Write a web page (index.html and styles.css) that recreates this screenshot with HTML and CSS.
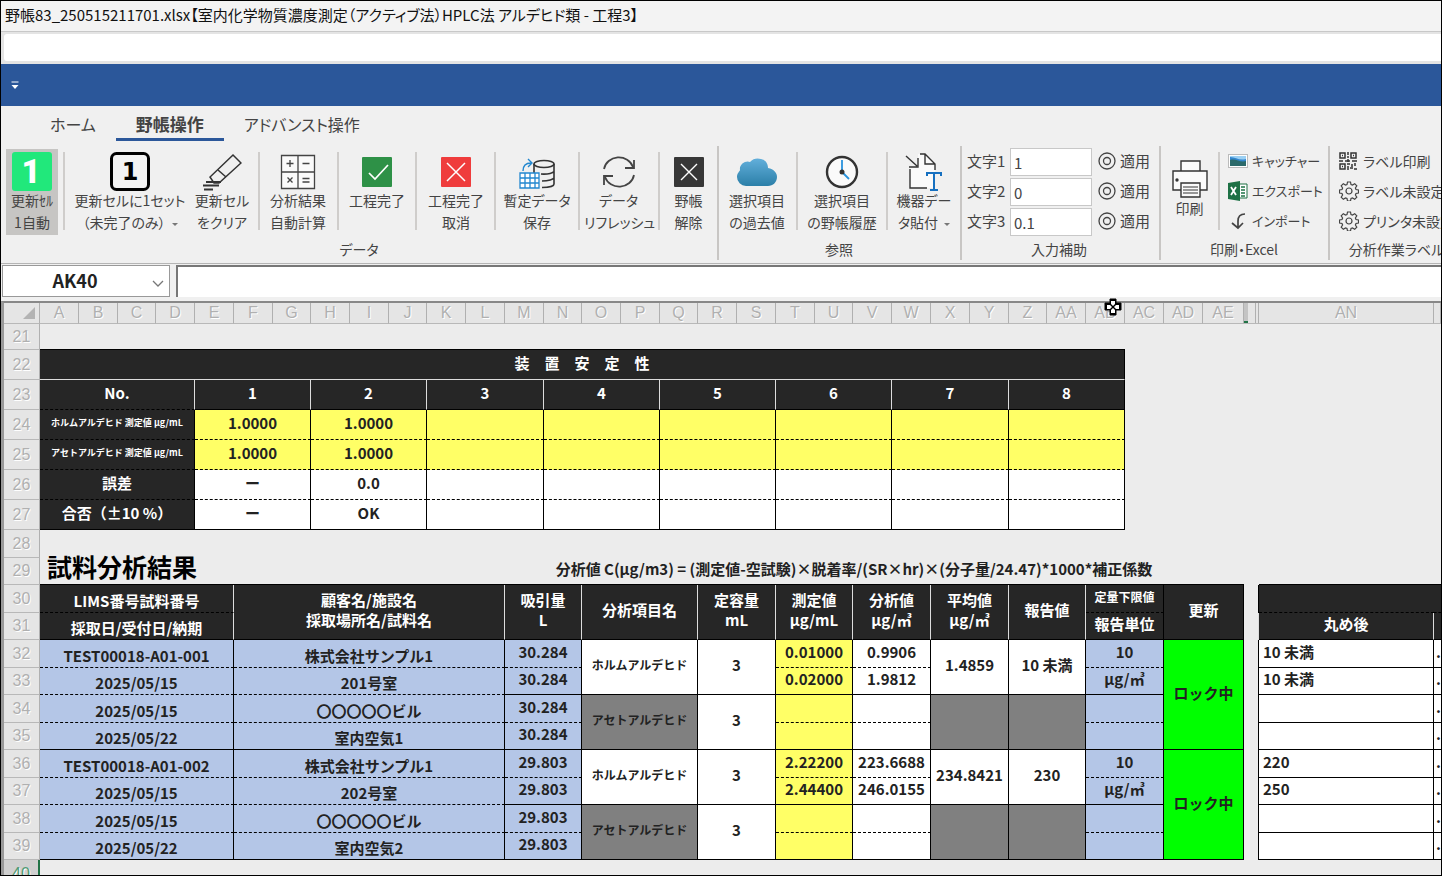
FILE: index.html
```
<!DOCTYPE html>
<html lang="ja">
<head>
  <meta charset="UTF-8">
  <title>野帳83_250515211701.xlsx</title>
  <link rel="stylesheet" href="styles.css">
</head>
<body>

  <header class="title-bar">野帳83_250515211701.xlsx【室内化学物質濃度測定（アクティブ法）HPLC法 アルデヒド類 - 工程3】</header>

  <div class="search-bar">
    <input type="text" class="search-input" aria-label="検索">
  </div>

  <div class="quick-bar">
    <button class="quick-menu" aria-label="クイックアクセス">
      <svg width="8" height="9" viewBox="0 0 8 9"><path d="M0.500 1H7.500" stroke="#fff"/><path d="M0.500 4h7L4 8z" fill="#fff"/></svg>
    </button>
  </div>

  <nav class="tabs">
    <button class="tab">ホーム</button>
    <button class="tab active">野帳操作</button>
    <button class="tab">アドバンスト操作</button>
  </nav>

  <div class="ribbon">

    <!-- データ -->
    <section class="group group-data">
      <div class="tools">
        <button class="tool pressed">
          <svg class="icon" viewBox="0 0 40 40"><rect y="1" width="40" height="39" rx="3" fill="#21e87b"/><text x="19" y="32" class="one-plain">1</text></svg>
          <span>更新ｾﾙ<br>1自動</span>
        </button>
        <i class="sep"></i>
        <button class="tool">
          <svg class="icon" viewBox="0 0 40 40"><rect x="1.500" y="2.500" width="37" height="36" rx="5" fill="#f3f3f3" stroke="#000" stroke-width="3"/><text x="20" y="29" class="one-serif">1</text></svg>
          <span>更新セルに1セット<br>（未完了のみ）<b class="arrow"></b></span>
        </button>
        <button class="tool">
          <svg class="icon" viewBox="0 0 40 40" fill="none" stroke="#333" stroke-width="1.500"><path d="M31 4l8 8-22 20h-5l-4-6z"/><path d="M16 19l8 7"/><path d="M4 31h15M1 34.500h16M2 38.500h9" stroke-width="1.800"/></svg>
          <span>更新セル<br>をクリア</span>
        </button>
        <i class="sep"></i>
        <button class="tool">
          <svg class="icon" viewBox="0 0 40 40" fill="none" stroke="#444" stroke-width="1.300"><path d="M3.500 4.500h33v33h-33zM20 4v33M4 21h32" fill="#fafafa"/><path d="M12 9v7M8.500 12.500h7M24.500 12.500h7M24.500 27.500h7M24.500 31h7M9.500 26.500l5 5M14.500 26.500l-5 5"/></svg>
          <span>分析結果<br>自動計算</span>
        </button>
        <i class="sep"></i>
        <button class="tool">
          <svg class="icon" viewBox="0 0 40 40"><rect x="5" y="6" width="30" height="30" rx="1" fill="#2e9147"/><path d="M12 22l6 6 13-14" fill="none" stroke="#fff" stroke-width="1.700"/></svg>
          <span>工程完了</span>
        </button>
        <i class="sep"></i>
        <button class="tool">
          <svg class="icon" viewBox="0 0 40 40"><rect x="5" y="6" width="30" height="30" rx="1" fill="#ef3c3c"/><path d="M11 12l18 18M29 12L11 30" stroke="#fff" stroke-width="1.500"/></svg>
          <span>工程完了<br>取消</span>
        </button>
        <i class="sep"></i>
        <button class="tool">
          <svg class="icon" viewBox="0 0 40 40" fill="none"><g stroke="#333" stroke-width="1.600"><ellipse cx="27" cy="13" rx="10" ry="3.500"/><path d="M17 13v9M37 13v20c0 2-5 3.500-12 3.500M37 20c0 2-6 3.500-13 3M37 26.500c0 2-6 3.500-12 3.500"/></g><path d="M3 22h19v15H3zM3 27h19M3 32h19M8 22v15M13 22v15M18 22v15" stroke="#2287cf" stroke-width="1.300" fill="#fff"/><path d="M6 20c0-5 2-8 8-8M11 8l4 4-4 4" stroke="#2287cf" stroke-width="1.400"/></svg>
          <span>暫定データ<br>保存</span>
        </button>
        <i class="sep"></i>
        <button class="tool">
          <svg class="icon" viewBox="0 0 40 40" fill="none" stroke="#444" stroke-width="1.800"><path d="M5 18a15 14 0 0 1 29-2M35 24a15 14 0 0 1-29 2"/><path d="M35 9v8h-9M5 34v-9h9"/></svg>
          <span>データ<br>リフレッシュ</span>
        </button>
        <i class="sep"></i>
        <button class="tool">
          <svg class="icon" viewBox="0 0 40 40"><rect x="5" y="6" width="30" height="30" rx="1" fill="#373737"/><path d="M12 13l16 16M28 13L12 29" stroke="#fff" stroke-width="1.400"/></svg>
          <span>野帳<br>解除</span>
        </button>
      </div>
      <h2>データ</h2>
    </section>

    <!-- 参照 -->
    <section class="group group-ref">
      <div class="tools">
        <button class="tool">
          <svg class="icon" viewBox="0 0 40 40"><defs><linearGradient id="sky" x1="0" y1="0" x2="0" y2="1"><stop offset="0" stop-color="#62afdb"/><stop offset="1" stop-color="#2b7fa8"/></linearGradient></defs><path d="M9 35a9 9 0 0 1-9-9c0-4 3-6 3-7-1-6 6-10 10-8 3-4 8-4 11-3 5 1 7 5 7 9 6 1 9 5 9 9 0 5-4 9-9 9z" fill="url(#sky)"/></svg>
          <span>選択項目<br>の過去値</span>
        </button>
        <i class="sep"></i>
        <button class="tool">
          <svg class="icon" viewBox="0 0 40 40"><circle cx="20" cy="21" r="15" fill="#fafafa" stroke="#333" stroke-width="2.400"/><path d="M20 21V9M20 21l7 7" stroke="#2a93dd" stroke-width="1.800"/><circle cx="20" cy="21" r="2.500" fill="#333"/></svg>
          <span>選択項目<br>の野帳履歴</span>
        </button>
        <i class="sep"></i>
        <button class="tool">
          <svg class="icon" viewBox="0 0 40 40" fill="none" stroke="#333" stroke-width="1.400"><path d="M6 16h8V3h6l11 10v24H6z" fill="#fafafa" stroke="none"/><path d="M6 18v19h17M16 3h5l10 10v6M21 3v10h10"/><path d="M2 5l11 10M5 16h9V7"/><path d="M23 25v-3h14v3M30 22v17M26 39h8" stroke="#1670c0" stroke-width="2"/></svg>
          <span>機器デー<br>タ貼付<b class="arrow"></b></span>
        </button>
      </div>
      <h2>参照</h2>
    </section>

    <!-- 入力補助 -->
    <section class="group group-input">
      <div class="tools fields">
        <label for="moji1">文字1</label>
        <input type="text" id="moji1" value="1">
        <button class="line"><svg width="18" height="18" viewBox="0 0 18 18" fill="none" stroke="#444" stroke-width="1.300"><circle cx="9" cy="9" r="8"/><circle cx="9" cy="9" r="3.500"/></svg>適用</button>
        <label for="moji2">文字2</label>
        <input type="text" id="moji2" value="0">
        <button class="line"><svg width="18" height="18" viewBox="0 0 18 18" fill="none" stroke="#444" stroke-width="1.300"><circle cx="9" cy="9" r="8"/><circle cx="9" cy="9" r="3.500"/></svg>適用</button>
        <label for="moji3">文字3</label>
        <input type="text" id="moji3" value="0.1">
        <button class="line"><svg width="18" height="18" viewBox="0 0 18 18" fill="none" stroke="#444" stroke-width="1.300"><circle cx="9" cy="9" r="8"/><circle cx="9" cy="9" r="3.500"/></svg>適用</button>
      </div>
      <h2>入力補助</h2>
    </section>

    <!-- 印刷・Excel -->
    <section class="group group-print">
      <div class="tools">
        <button class="tool print">
          <svg class="icon" viewBox="0 0 40 40" fill="#fafafa" stroke="#333" stroke-width="1.400"><path d="M11 12V2h19v10"/><path d="M3 12h34v19H3z"/><path d="M11 24h19v14H11z"/><path d="M13 28h15M13 31h15M13 34h15" stroke="#777"/><circle cx="7" cy="21" r="1" fill="#333"/></svg>
          <span>印刷</span>
        </button>
        <i class="sep"></i>
        <div class="lines">
          <button class="line"><svg width="20" height="18" viewBox="0 0 20 18"><rect x="0.500" y="2.500" width="19" height="13" fill="#fff" stroke="#bbb"/><path d="M2 4h16v10H2z" fill="#3487cf"/><path d="M2 8c6-2 10 3 16 1v5H2z" fill="#2b6a6a"/><path d="M2 5c6 0 9 4 16 2V4H2z" fill="#9bd0f3"/></svg>キャッチャー</button>
          <button class="line"><svg width="20" height="20" viewBox="0 0 20 20"><path d="M10 3h9v14h-9z" fill="#fff" stroke="#1e7145"/><path d="M13 6h4M13 9h4M13 12h4M13 15h4" stroke="#1e7145" stroke-width="1.500"/><path d="M0 2l12-2v20L0 18z" fill="#1e7145"/><path d="M3 6l5 8M8 6l-5 8" stroke="#fff" stroke-width="1.800"/></svg>エクスポート</button>
          <button class="line"><svg width="20" height="18" viewBox="0 0 20 18" fill="none" stroke="#444" stroke-width="1.700"><path d="M17 2c-5 0-7 3-7 7v7M4 11l6 5 5-5"/></svg>インポート</button>
        </div>
      </div>
      <h2>印刷・Excel</h2>
    </section>

    <!-- 分析作業ラベル -->
    <section class="group group-label">
      <div class="tools lines">
        <button class="line"><svg width="20" height="18" viewBox="0 0 20 18" fill="none" stroke="#333" stroke-width="1.500"><path d="M1 1h5v5H1zM12 1h5v5h-5zM1 12h5v5H1z"/><path d="M3 3.500h1M14 3.500h1M3 14.500h1M9 0v3M8 5h2M9 7v3M0 9h4M6 9h5M13 9h5M8 12h3M13 12v3M16 11v3M9 14v4M11 16h3M15 17h3"/></svg>ラベル印刷</button>
        <button class="line"><svg width="20" height="20" viewBox="-10 -10 20 20" fill="none" stroke="#444" stroke-width="1.200"><circle r="3"/><path d="M-1.500-9h3l.5 2.500 1.500.6 2.200-1.400 2.100 2.100-1.400 2.200.6 1.500 2.500.5v3l-2.500.5-.6 1.500 1.400 2.200-2.100 2.100-2.200-1.400-1.500.6-.5 2.500h-3l-.5-2.500-1.500-.6-2.200 1.400-2.100-2.100 1.400-2.200-.6-1.500L-9.500 2v-3l2.500-.5.600-1.500-1.400-2.200 2.100-2.100 2.200 1.400 1.500-.6z"/></svg>ラベル未設定</button>
        <button class="line"><svg width="20" height="20" viewBox="-10 -10 20 20" fill="none" stroke="#444" stroke-width="1.200"><circle r="3"/><path d="M-1.500-9h3l.5 2.500 1.500.6 2.200-1.400 2.100 2.100-1.400 2.200.6 1.500 2.500.5v3l-2.500.5-.6 1.500 1.400 2.200-2.100 2.100-2.200-1.400-1.500.6-.5 2.500h-3l-.5-2.500-1.500-.6-2.200 1.400-2.100-2.100 1.400-2.200-.6-1.500L-9.500 2v-3l2.500-.5.600-1.500-1.400-2.200 2.100-2.100 2.200 1.400 1.500-.6z"/></svg>プリンタ未設定</button>
      </div>
      <h2>分析作業ラベル</h2>
    </section>
  </div>

  <div class="formula-bar">
    <div class="name-box">
      <input type="text" value="AK40" aria-label="名前ボックス">
      <button aria-label="名前の一覧"><svg width="12" height="7" viewBox="0 0 12 7" fill="none" stroke="#777" stroke-width="1.300"><path d="M1 1l5 5 5-5"/></svg></button>
    </div>
    <input type="text" class="formula-input" aria-label="数式バー">
  </div>

  <main class="sheet">
    <table>
      <colgroup>
        <col class="c-head">
        <col class="c39"><col class="c39"><col class="c38"><col class="c39">
        <col class="c39"><col class="c39"><col class="c38"><col class="c39">
        <col class="c39"><col class="c38"><col class="c39"><col class="c39">
        <col class="c39"><col class="c38"><col class="c39"><col class="c39">
        <col class="c38"><col class="c39"><col class="c39"><col class="c39">
        <col class="c38"><col class="c39"><col class="c39"><col class="c39">
        <col class="c39"><col class="c38"><col class="c39"><col class="c39">
        <col class="c39"><col class="c39"><col class="c41">
        <col class="c-gap"><col class="c-an"><col>
      </colgroup>
      <thead>
        <tr>
          <th class="corner"><svg width="12" height="12" viewBox="0 0 12 12"><path d="M12 0v12H0z" fill="#b3b3b3"/></svg></th>
          <th>A</th><th>B</th><th>C</th><th>D</th><th>E</th><th>F</th><th>G</th><th>H</th>
          <th>I</th><th>J</th><th>K</th><th>L</th><th>M</th><th>N</th><th>O</th><th>P</th>
          <th>Q</th><th>R</th><th>S</th><th>T</th><th>U</th><th>V</th><th>W</th><th>X</th>
          <th>Y</th><th>Z</th><th>AA</th><th>AB</th><th>AC</th><th>AD</th><th>AE</th>
          <th class="hidden-cols"><i class="current"></i><i></i></th>
          <th>AN</th><th></th>
        </tr>
      </thead>
      <tbody>
        <tr class="h26"><th>21</th><td colspan="28" class="edge"></td><td colspan="6"></td></tr>

        <!-- 装置安定性 -->
        <tr class="h30"><th>22</th><td colspan="28" class="dark white-b">装　置　安　定　性</td><td colspan="6"></td></tr>
        <tr class="h30">
          <th>23</th>
          <td colspan="4" class="dark white-r dash">No.</td>
          <td colspan="3" class="dark white-r">1</td><td colspan="3" class="dark white-r">2</td>
          <td colspan="3" class="dark white-r">3</td><td colspan="3" class="dark white-r">4</td>
          <td colspan="3" class="dark white-r">5</td><td colspan="3" class="dark white-r">6</td>
          <td colspan="3" class="dark white-r">7</td><td colspan="3" class="dark">8</td>
          <td colspan="6"></td>
        </tr>
        <tr class="h30">
          <th>24</th>
          <td colspan="4" class="dark dash tiny">ホルムアルデヒド 測定値 μg/mL</td>
          <td colspan="3" class="yellow dash">1.0000</td><td colspan="3" class="yellow dash">1.0000</td>
          <td colspan="3" class="yellow dash"></td><td colspan="3" class="yellow dash"></td>
          <td colspan="3" class="yellow dash"></td><td colspan="3" class="yellow dash"></td>
          <td colspan="3" class="yellow dash"></td><td colspan="3" class="yellow dash"></td>
          <td colspan="6"></td>
        </tr>
        <tr class="h30">
          <th>25</th>
          <td colspan="4" class="dark dash tiny">アセトアルデヒド 測定値 μg/mL</td>
          <td colspan="3" class="yellow dash">1.0000</td><td colspan="3" class="yellow dash">1.0000</td>
          <td colspan="3" class="yellow dash"></td><td colspan="3" class="yellow dash"></td>
          <td colspan="3" class="yellow dash"></td><td colspan="3" class="yellow dash"></td>
          <td colspan="3" class="yellow dash"></td><td colspan="3" class="yellow dash"></td>
          <td colspan="6"></td>
        </tr>
        <tr class="h30">
          <th>26</th>
          <td colspan="4" class="dark dash">誤差</td>
          <td colspan="3" class="white dash">ー</td><td colspan="3" class="white dash">0.0</td>
          <td colspan="3" class="white dash"></td><td colspan="3" class="white dash"></td>
          <td colspan="3" class="white dash"></td><td colspan="3" class="white dash"></td>
          <td colspan="3" class="white dash"></td><td colspan="3" class="white dash"></td>
          <td colspan="6"></td>
        </tr>
        <tr class="h30">
          <th>27</th>
          <td colspan="4" class="dark">合否（±10 %）</td>
          <td colspan="3" class="white">ー</td><td colspan="3" class="white">OK</td>
          <td colspan="3" class="white"></td><td colspan="3" class="white"></td>
          <td colspan="3" class="white"></td><td colspan="3" class="white"></td>
          <td colspan="3" class="white"></td><td colspan="3" class="white"></td>
          <td colspan="6"></td>
        </tr>
        <tr class="h28"><th>28</th><td colspan="34"></td></tr>

        <!-- 試料分析結果 -->
        <tr class="h27">
          <th>29</th>
          <td colspan="12" class="edge heading">試料分析結果</td>
          <td colspan="18" class="edge formula">分析値 C(μg/m3) = (測定値-空試験)×脱着率/(SR×hr)×(分子量/24.47)*1000*補正係数</td>
          <td class="edge"></td><td></td><td colspan="2" class="edge"></td>
        </tr>
        <tr class="h28">
          <th>30</th>
          <td colspan="5" class="dark dash low white-r">LIMS番号試料番号</td>
          <td colspan="7" rowspan="2" class="dark white-r">顧客名/施設名<br>採取場所名/試料名</td>
          <td colspan="2" rowspan="2" class="dark white-r">吸引量<br>L</td>
          <td colspan="3" rowspan="2" class="dark white-r">分析項目名</td>
          <td colspan="2" rowspan="2" class="dark white-r">定容量<br>mL</td>
          <td colspan="2" rowspan="2" class="dark white-r">測定値<br>μg/mL</td>
          <td colspan="2" rowspan="2" class="dark white-r">分析値<br>μg/㎥</td>
          <td colspan="2" rowspan="2" class="dark white-r">平均値<br>μg/㎥</td>
          <td colspan="2" rowspan="2" class="dark white-r">報告値</td>
          <td colspan="2" class="dark dash small">定量下限値</td>
          <td colspan="2" rowspan="2" class="dark">更新</td>
          <td class="gap"></td>
          <td class="dark dash no-r"></td><td class="dark dash no-r"></td>
        </tr>
        <tr class="h27">
          <th>31</th>
          <td colspan="5" class="dark low white-r">採取日/受付日/納期</td>
          <td colspan="2" class="dark">報告単位</td>
          <td class="gap white-r"></td>
          <td class="dark white-r">丸め後</td><td class="dark no-r"></td>
        </tr>
        <tr class="h28">
          <th>32</th>
          <td colspan="5" class="blue dash low">TEST00018-A01-001</td>
          <td colspan="7" class="blue dash low">株式会社サンプル1</td>
          <td colspan="2" class="blue dash">30.284</td>
          <td colspan="3" rowspan="2" class="white item">ホルムアルデヒド</td>
          <td colspan="2" rowspan="2" class="white">3</td>
          <td colspan="2" class="yellow dash">0.01000</td>
          <td colspan="2" class="white dash">0.9906</td>
          <td colspan="2" rowspan="2" class="white">1.4859</td>
          <td colspan="2" rowspan="2" class="white">10 未満</td>
          <td colspan="2" class="blue dash">10</td>
          <td colspan="2" rowspan="4" class="green">ロック中</td>
          <td class="gap"></td><td class="white left">10 未満</td><td class="white left last">.</td>
        </tr>
        <tr class="h27">
          <th>33</th>
          <td colspan="5" class="blue dash low">2025/05/15</td>
          <td colspan="7" class="blue dash low">201号室</td>
          <td colspan="2" class="blue">30.284</td>
          <td colspan="2" class="yellow">0.02000</td>
          <td colspan="2" class="white">1.9812</td>
          <td colspan="2" class="blue">μg/㎥</td>
          <td class="gap"></td><td class="white left">10 未満</td><td class="white left last">.</td>
        </tr>
        <tr class="h28">
          <th>34</th>
          <td colspan="5" class="blue dash low">2025/05/15</td>
          <td colspan="7" class="blue dash low">〇〇〇〇〇ビル</td>
          <td colspan="2" class="blue dash">30.284</td>
          <td colspan="3" rowspan="2" class="gray item">アセトアルデヒド</td>
          <td colspan="2" rowspan="2" class="white">3</td>
          <td colspan="2" class="yellow dash"></td>
          <td colspan="2" class="white dash"></td>
          <td colspan="2" rowspan="2" class="gray"></td>
          <td colspan="2" rowspan="2" class="gray"></td>
          <td colspan="2" class="blue dash"></td>
          <td class="gap"></td><td class="white"></td><td class="white left last">.</td>
        </tr>
        <tr class="h27">
          <th>35</th>
          <td colspan="5" class="blue low">2025/05/22</td>
          <td colspan="7" class="blue low">室内空気1</td>
          <td colspan="2" class="blue">30.284</td>
          <td colspan="2" class="yellow"></td>
          <td colspan="2" class="white"></td>
          <td colspan="2" class="blue"></td>
          <td class="gap"></td><td class="white"></td><td class="white left last">.</td>
        </tr>
        <tr class="h28">
          <th>36</th>
          <td colspan="5" class="blue dash low">TEST00018-A01-002</td>
          <td colspan="7" class="blue dash low">株式会社サンプル1</td>
          <td colspan="2" class="blue dash">29.803</td>
          <td colspan="3" rowspan="2" class="white item">ホルムアルデヒド</td>
          <td colspan="2" rowspan="2" class="white">3</td>
          <td colspan="2" class="yellow dash">2.22200</td>
          <td colspan="2" class="white dash">223.6688</td>
          <td colspan="2" rowspan="2" class="white">234.8421</td>
          <td colspan="2" rowspan="2" class="white">230</td>
          <td colspan="2" class="blue dash">10</td>
          <td colspan="2" rowspan="4" class="green">ロック中</td>
          <td class="gap"></td><td class="white left">220</td><td class="white left last">.</td>
        </tr>
        <tr class="h27">
          <th>37</th>
          <td colspan="5" class="blue dash low">2025/05/15</td>
          <td colspan="7" class="blue dash low">202号室</td>
          <td colspan="2" class="blue">29.803</td>
          <td colspan="2" class="yellow">2.44400</td>
          <td colspan="2" class="white">246.0155</td>
          <td colspan="2" class="blue">μg/㎥</td>
          <td class="gap"></td><td class="white left">250</td><td class="white left last">.</td>
        </tr>
        <tr class="h28">
          <th>38</th>
          <td colspan="5" class="blue dash low">2025/05/15</td>
          <td colspan="7" class="blue dash low">〇〇〇〇〇ビル</td>
          <td colspan="2" class="blue dash">29.803</td>
          <td colspan="3" rowspan="2" class="gray item">アセトアルデヒド</td>
          <td colspan="2" rowspan="2" class="white">3</td>
          <td colspan="2" class="yellow dash"></td>
          <td colspan="2" class="white dash"></td>
          <td colspan="2" rowspan="2" class="gray"></td>
          <td colspan="2" rowspan="2" class="gray"></td>
          <td colspan="2" class="blue dash"></td>
          <td class="gap"></td><td class="white"></td><td class="white left last">.</td>
        </tr>
        <tr class="h27">
          <th>39</th>
          <td colspan="5" class="blue low">2025/05/22</td>
          <td colspan="7" class="blue low">室内空気2</td>
          <td colspan="2" class="blue">29.803</td>
          <td colspan="2" class="yellow"></td>
          <td colspan="2" class="white"></td>
          <td colspan="2" class="blue"></td>
          <td class="gap"></td><td class="white"></td><td class="white left last">.</td>
        </tr>
        <tr class="h28"><th class="current-row">40</th><td colspan="34"></td></tr>
      </tbody>
    </table>
  </main>

  <!-- cell pointer -->
  <svg class="pointer" width="18" height="18" viewBox="0 0 18 18"><path d="M6 1h6v4h5v7h-5v5H6v-5H1V5h5z" fill="#000" stroke="#000" stroke-linejoin="round"/><path d="M7 3h4v3L9 8 7 6zM7 15h4v-3L9 10l-2 2zM3 7h3l2 2-2 2H3zM15 7h-3l-2 2 2 2h3z" fill="#fff"/></svg>

</body>
</html>
```
FILE: styles.css
```
* {
  box-sizing: border-box;
}
body {
  position: relative;
  display: flex;
  flex-direction: column;
  height: 100vh;
  margin: 0;
  overflow: hidden;
  border: 1px solid #000;
  background-color: #f0f0f0;
  color: #444;
  font-family: "Noto Sans CJK JP", sans-serif;
  font-size: 14px;
}
button, input {
  margin: 0;
  padding: 0;
  border: none;
  background: none;
  color: inherit;
  font: inherit;
  outline: none;
}
svg {
  flex: none;
}

/* Window top */
.title-bar {
  height: 30px;
  padding-left: 4px;
  background-color: #f3f3f3;
  color: #111;
  font-size: 15px;
  line-height: 28px;
  font-feature-settings: "palt";
  white-space: nowrap;
}
.search-bar {
  height: 33px;
  padding: 2px 0 3px 3px;
  background-color: #e4e4e4;
  border-top: 1px solid #c8c8c8;
}
.search-input {
  display: block;
  width: 100%;
  height: 27px;
  border-radius: 3px 0 0 3px;
  background-color: #fff;
}
.quick-bar {
  display: flex;
  align-items: center;
  height: 42px;
  padding-left: 10px;
  background-color: #2b579a;
}
.quick-menu {
  display: flex;
}

/* Tabs */
.tabs {
  display: flex;
  height: 36px;
  padding-left: 29px;
}
.tab {
  height: 35px;
  padding: 0 20px;
  border-bottom: 3px solid transparent;
  font-size: 16px;
  line-height: 36px;
  font-feature-settings: "palt";
}
.tab.active {
  border-color: #2b579a;
  font-size: 17px;
  font-weight: bold;
}

/* Ribbon */
.ribbon {
  display: flex;
  height: 121px;
  padding: 4px 0 3px;
  overflow: hidden;
  font-feature-settings: "palt";
  white-space: nowrap;
}
.group {
  display: flex;
  flex: none;
  flex-direction: column;
  padding: 1px 6px 0 5px;
  border-right: 2px solid #c8c6c4;
}
.group h2 {
  margin: 4px 0 0;
  font-size: 14px;
  font-weight: normal;
  line-height: 20px;
  text-align: center;
}
.tools {
  display: grid;
  flex: none;
  align-items: end;
  height: 88px;
}
.group-data {
  padding-right: 5px;
}
.group-data .tools {
  grid-template-columns: 52px 12px 120px 64px 10px 68px 12px 66px 12px 68px 10px 74px 10px 69px 12px 47px;
}
.group-ref .tools {
  grid-template-columns: 66px 14px 76px 14px 60px;
}
.group-print .tools {
  grid-template-columns: 47px 12px 97px;
}
.group-input {
  padding-right: 8px;
}
.group-label {
  padding-left: 9px;
  border-right: none;
}
.sep {
  align-self: center;
  justify-self: center;
  width: 2px;
  height: 78px;
  background-color: #cfcdcb;
}
.tool {
  height: 86px;
  padding-top: 2px;
  line-height: 22px;
}
.tool.pressed {
  background-color: #c6c5c3;
}
.icon {
  display: block;
  width: 40px;
  height: 40px;
  margin: 0 auto;
}
.tool span {
  display: block;
  height: 46px;
  margin-top: -2px;
}
.tool.print {
  padding-top: 10px;
}
.one-plain {
  fill: #fff;
  font: 900 33px Roboto, sans-serif;
  text-anchor: middle;
}
.one-serif {
  fill: #000;
  font: bold 24px "DejaVu Sans", sans-serif;
  text-anchor: middle;
}
.arrow {
  display: inline-block;
  margin-left: 6px;
  border: 3px solid transparent;
  border-top-color: #777;
  border-bottom: none;
  vertical-align: middle;
}
.tools.fields {
  grid-template-columns: 43px 82px 59px;
  grid-template-rows: repeat(3, 30px);
  align-items: center;
}
.fields label {
  padding-bottom: 3px;
  font-size: 15px;
}
.fields input {
  width: 82px;
  height: 28px;
  padding: 0 3px;
  border: 1px solid #c8c8c8;
  background-color: #fff;
  font-size: 15px;
}
.fields .line {
  padding-left: 6px;
  font-size: 15px;
}
.line {
  display: flex;
  align-items: center;
  gap: 4px;
  height: 30px;
  padding-bottom: 3px;
}
.lines {
  align-content: start;
  height: 88px;
}
.group-print .lines {
  padding-left: 3px;
  font-size: 13px;
}

/* Formula bar */
.formula-bar {
  display: flex;
  gap: 6px;
  height: 38px;
  padding: 1px 0 4px 1px;
  border-top: 1px solid #b5b5b5;
}
.name-box {
  display: flex;
  width: 168px;
  border: 1px solid #999;
  background-color: #fff;
}
.name-box input {
  flex: 1;
  min-width: 0;
  padding-bottom: 3px;
  color: #222;
  font-size: 18px;
  font-weight: bold;
  text-align: center;
}
.name-box button {
  width: 22px;
}
.formula-input {
  flex: 1;
  border: 2px solid #777;
  border-right: none;
  border-bottom: none;
  background-color: #fff;
}

/* Sheet */
.sheet {
  flex: 1;
  overflow: hidden;
  border-top: 2px solid #888;
  border-left: 3px solid #999;
  background-color: #ececec;
}
table {
  width: 100%;
  border-spacing: 0;
  table-layout: fixed;
}
.c-head { width: 36px; }
.c38 { width: 38px; }
.c39 { width: 39px; }
.c41 { width: 41px; }
.c-gap { width: 15px; }
.c-an { width: 175px; }
th {
  padding: 0;
  border-right: 1px solid #b0b0b0;
  border-bottom: 1px solid #b8b8b8;
  background-color: #e5e5e5;
  color: #b0b0b0;
  font: 16px "Liberation Sans", sans-serif;
  line-height: 20px;
  text-shadow: 1px 1px 0 #fff;
}
thead tr {
  height: 21px;
}
thead th {
  line-height: 18px;
}
.corner {
  padding-right: 4px;
  text-align: right;
  line-height: 10px;
}
.hidden-cols {
  text-align: left;
}
.hidden-cols i {
  display: inline-block;
  width: 8px;
  height: 20px;
  border-right: 1px solid #b0b0b0;
  vertical-align: top;
}
.hidden-cols .current {
  width: 4px;
  border-right: none;
  border-bottom: 2px solid #217346;
  background-color: #c4c4c4;
}
.current-row {
  border-right: 2px solid #217346;
  background-color: #d0d0d0;
  color: #4e9a72;
}
.h26 { height: 26px; }
.h27 { height: 27px; }
.h28 { height: 28px; }
.h30 { height: 30px; }
td {
  padding: 0 0 4px;
  color: #222;
  font-size: 15px;
  font-weight: bold;
  line-height: 20px;
  text-align: center;
  white-space: nowrap;
}
.dark, .yellow, .white, .blue, .gray, .green {
  border-right: 1px solid #000;
  border-bottom: 1px solid #000;
}
.edge {
  border-bottom: 1px solid #000;
}
.gap {
  border-right: 1px solid #000;
}
.dark {
  background-color: #262626;
  color: #fff;
}
.yellow {
  background-color: #ffff66;
}
.white {
  background-color: #fff;
}
.blue {
  background-color: #b4c6e7;
}
.gray {
  background-color: #808080;
}
.green {
  background-color: #00ff00;
}
.dash {
  border-bottom-style: dashed;
}
.white-b {
  border-bottom-color: #ddd;
}
.white-r {
  border-right-color: #ddd;
}
.no-r {
  border-right: none;
}
.low {
  padding: 4px 0 0;
}
.left {
  padding-left: 4px;
  text-align: left;
}
.last {
  padding-left: 2px;
  border-right: none;
}
.tiny {
  font-size: 9px;
}
.small, .item {
  font-size: 12px;
}
.heading {
  padding: 0 0 10px 7px;
  color: #000;
  font-size: 25px;
  line-height: 16px;
  text-align: left;
}
.pointer {
  position: absolute;
  top: 297px;
  left: 1103px;
}
```
